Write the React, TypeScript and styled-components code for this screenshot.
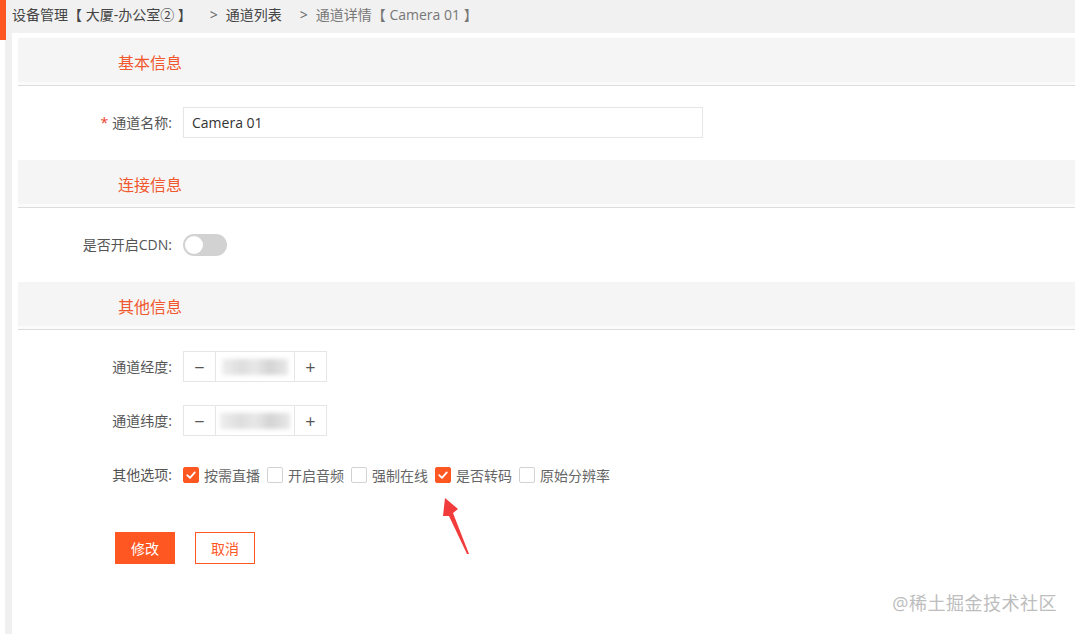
import styled, { createGlobalStyle } from 'styled-components';

const GlobalStyle = createGlobalStyle`
  html, body {
    margin: 0;
    padding: 0;
    background: #fff;
    font-family: "Open Sans", "Noto Sans CJK SC", sans-serif;
    font-size: 14px;
    color: #333;
  }
  * { box-sizing: border-box; }
`;

const orange = '#ff5722';

const Page = styled.div`
  position: relative;
  display: flex;
  width: 1075px;
  height: 634px;
  overflow: hidden;
`;

const Rail = styled.div`
  width: 12px;
  flex-shrink: 0;
  background: linear-gradient(to right, #fff 0 5px, #f0f0f0 5px 12px);
`;

const ActiveMark = styled.div`
  width: 6px;
  height: 40px;
  background: ${orange};
`;

const Main = styled.div`
  flex: 1;
  display: flex;
  flex-direction: column;
  min-width: 0;
`;

const Breadcrumb = styled.div`
  height: 33px;
  background: #f1f1f1;
  display: flex;
  align-items: center;
  padding-bottom: 4px;
  white-space: nowrap;
`;

const Crumb = styled.span<{ $muted?: boolean }>`
  color: ${p => (p.$muted ? '#777' : '#444')};
  line-height: 20px;
`;

const Sep = styled.span`
  color: #666;
  margin: 0 8px 0 18px;
`;

const Panel = styled.div`
  flex: 1;
  background: #fff;
  padding: 5px 0 0 6px;
`;

const SectionHead = styled.div`
  height: 48px;
  background: #f5f5f5;
  border-bottom: 1px solid #ddd;
  box-shadow: inset 0 -3px 0 #fbfbfb;
  display: flex;
  align-items: center;
  padding-left: 100px;
  color: #f0582e;
  font-size: 16px;
`;

const SectionBody = styled.div<{ $gap?: number }>`
  display: flex;
  flex-direction: column;
  gap: ${p => p.$gap ?? 23}px;
  padding: 21px 0 22px;
`;

const Row = styled.div`
  display: flex;
  align-items: center;
  height: 31px;
`;

const Label = styled.label`
  width: 165px;
  flex-shrink: 0;
  text-align: right;
  padding-right: 11px;
  color: #555;
  line-height: 20px;
`;

const Star = styled.span`
  color: #f0402e;
  margin-right: 4px;
`;

const TextInput = styled.div`
  width: 520px;
  height: 31px;
  border: 1px solid #e6e6e6;
  display: flex;
  align-items: center;
  padding-left: 8px;
  color: #333;
`;

const Switch = styled.div`
  width: 44px;
  height: 22px;
  border-radius: 11px;
  background: #d2d2d2;
  padding: 2px;
  display: flex;
  align-items: center;
`;

const Knob = styled.div`
  width: 18px;
  height: 18px;
  border-radius: 50%;
  background: #fff;
`;

const NumberBox = styled.div`
  display: flex;
  width: 144px;
  height: 31px;
  border: 1px solid #e6e6e6;
`;

const StepBtn = styled.div<{ $side: 'left' | 'right' }>`
  width: 32px;
  display: flex;
  align-items: center;
  justify-content: center;
  font-size: 18px;
  color: #555;
  ${p => (p.$side === 'left' ? 'border-right' : 'border-left')}: 1px solid #e6e6e6;
`;

const NumberValue = styled.div`
  flex: 1;
  display: flex;
  align-items: center;
  justify-content: center;
  overflow: hidden;
`;

const Blurred = styled.span<{ $w: number }>`
  display: block;
  width: ${p => p.$w}px;
  height: 16px;
  background: linear-gradient(to right, #eee, #ddd 30%, #e8e8e8 50%, #d4d4d4 72%, #e8e8e8);
  filter: blur(2px);
`;

const Options = styled.div`
  display: flex;
  align-items: center;
  gap: 7px;
`;

const Option = styled.div`
  display: flex;
  align-items: center;
  gap: 5px;
  color: #666;
`;

const Box = styled.span<{ $checked?: boolean }>`
  width: 16px;
  height: 16px;
  border-radius: 2px;
  display: flex;
  align-items: center;
  justify-content: center;
  background: ${p => (p.$checked ? orange : '#fff')};
  border: 1px solid ${p => (p.$checked ? orange : '#d2d2d2')};
`;

const Actions = styled.div`
  display: flex;
  gap: 20px;
  padding: 19px 0 0 97px;
`;

const Button = styled.button<{ $primary?: boolean }>`
  width: 60px;
  height: 32px;
  font-family: inherit;
  font-size: 14px;
  cursor: pointer;
  background: ${p => (p.$primary ? orange : '#fff')};
  color: ${p => (p.$primary ? '#fff' : orange)};
  border: 1px solid ${orange};
  padding: 0;
`;

const Arrow = styled.svg`
  position: absolute;
  left: 436px;
  top: 494px;
`;

const Watermark = styled.div`
  position: absolute;
  right: 18px;
  bottom: 19px;
  font-size: 18px;
  color: #bdbdbd;
  letter-spacing: 0.5px;
`;

const Check = () => (
  <svg width="12" height="12" viewBox="0 0 12 12">
    <path d="M2.2 6.2 L5 8.8 L9.8 3.4" fill="none" stroke="#fff" strokeWidth="1.8" strokeLinecap="round" strokeLinejoin="round" />
  </svg>
);

const options = [
  { label: '按需直播', checked: true },
  { label: '开启音频', checked: false },
  { label: '强制在线', checked: false },
  { label: '是否转码', checked: true },
  { label: '原始分辨率', checked: false },
];

export default function App() {
  return (
    <>
      <GlobalStyle />
      <Page>
        <Rail>
          <ActiveMark />
        </Rail>
        <Main>
          <Breadcrumb>
            <Crumb>设备管理【 大厦-办公室② 】</Crumb>
            <Sep>&gt;</Sep>
            <Crumb>通道列表</Crumb>
            <Sep>&gt;</Sep>
            <Crumb $muted>通道详情【 Camera 01 】</Crumb>
          </Breadcrumb>
          <Panel>
            <SectionHead>基本信息</SectionHead>
            <SectionBody>
              <Row>
                <Label><Star>*</Star>通道名称:</Label>
                <TextInput>Camera 01</TextInput>
              </Row>
            </SectionBody>

            <SectionHead>连接信息</SectionHead>
            <SectionBody>
              <Row>
                <Label>是否开启CDN:</Label>
                <Switch><Knob /></Switch>
              </Row>
            </SectionBody>

            <SectionHead>其他信息</SectionHead>
            <SectionBody>
              <Row>
                <Label>通道经度:</Label>
                <NumberBox>
                  <StepBtn $side="left">−</StepBtn>
                  <NumberValue><Blurred $w={66} /></NumberValue>
                  <StepBtn $side="right">+</StepBtn>
                </NumberBox>
              </Row>
              <Row>
                <Label>通道纬度:</Label>
                <NumberBox>
                  <StepBtn $side="left">−</StepBtn>
                  <NumberValue><Blurred $w={70} /></NumberValue>
                  <StepBtn $side="right">+</StepBtn>
                </NumberBox>
              </Row>
              <Row>
                <Label>其他选项:</Label>
                <Options>
                  {options.map(o => (
                    <Option key={o.label}>
                      <Box $checked={o.checked}>{o.checked && <Check />}</Box>
                      {o.label}
                    </Option>
                  ))}
                </Options>
              </Row>
              <Actions>
                <Button $primary>修改</Button>
                <Button>取消</Button>
              </Actions>
            </SectionBody>
          </Panel>
        </Main>
        <Arrow width="40" height="64" viewBox="0 0 40 64">
          <polygon points="9,4 22,15 17,19 33,60 31,60 13,22 7,22" fill="#f23b3b" />
        </Arrow>
        <Watermark>@稀土掘金技术社区</Watermark>
      </Page>
    </>
  );
}
